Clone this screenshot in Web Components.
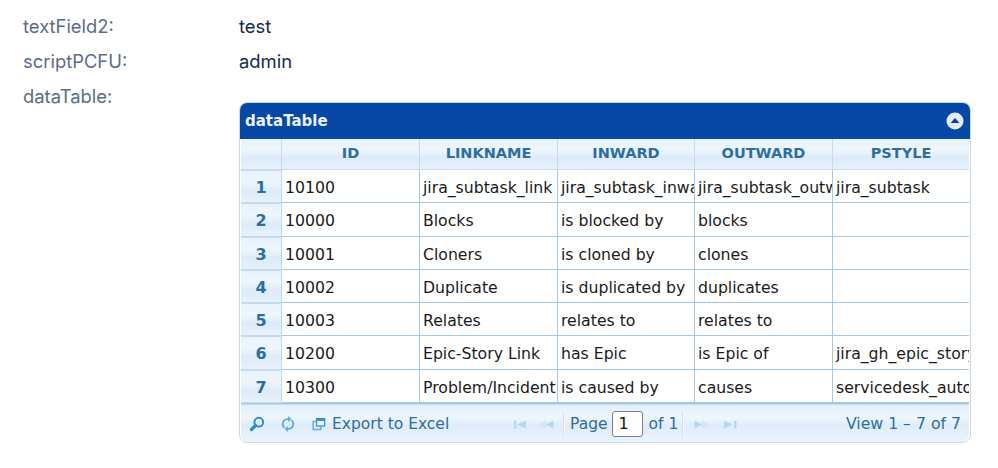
<!DOCTYPE html>
<html>
<head>
<meta charset="utf-8">
<style>
  html, body { margin: 0; padding: 0; background: #fff; height: 468px; overflow: hidden; }
</style>
</head>
<body>
<issue-view>
  <field-row label="textField2:">test</field-row>
  <field-row label="scriptPCFU:">admin</field-row>
  <field-row label="dataTable:"><data-grid caption="dataTable"></data-grid></field-row>
</issue-view>

<script>
class IssueView extends HTMLElement {
  constructor() {
    super();
    this.attachShadow({ mode: "open" });
    this.shadowRoot.innerHTML = `
      <style>
        :host { display: block; padding: 9px 0 0 23px; font-family: Inter, "Noto Sans", sans-serif; font-size: 18.4px; }
      </style>
      <slot></slot>`;
  }
}

class FieldRow extends HTMLElement {
  constructor() {
    super();
    this.attachShadow({ mode: "open" });
  }
  connectedCallback() {
    this.shadowRoot.innerHTML = `
      <style>
        :host { display: grid; grid-template-columns: 216px auto; justify-content: start; }
        .label { color: #5e6c84; height: 35px; line-height: 35px; }
        .value { color: #172b4d; line-height: 35px; min-height: 35px; }
      </style>
      <div class="label">${this.getAttribute("label")}</div>
      <div class="value"><slot></slot></div>`;
  }
}

const ICONS = {
  search: `<svg width="16" height="16" viewBox="0 0 16 16"><circle cx="9.8" cy="6.2" r="4.4" fill="none" stroke="#2e8ad0" stroke-width="2"/><path d="M6.500 9.500 2.500 13.500" stroke="#2e8ad0" stroke-width="3.200" stroke-linecap="round"/></svg>`,
  reload: `<svg width="16" height="18" viewBox="0 0 16 18" fill="none" stroke="#62ade8" stroke-width="1.800"><path d="M8 4.200H7A4.800 4.800 0 0 0 4.600 12.800"/><path d="M8 13.800h1A4.800 4.800 0 0 0 11.400 5.200"/><path d="M8 1v6L11.500 4zM8 17v-6L4.500 14z" fill="#62ade8" stroke="none"/></svg>`,
  newwin: `<svg width="16" height="16" viewBox="0 0 16 16" fill="none" stroke="#3d8fcf" stroke-width="1.300"><rect x="5.600" y="2.600" width="8" height="7.400" fill="#eaf4fd"/><path d="M5.600 3.800h8" stroke-width="2.400"/><path d="M5.600 5.600H2.200v7.800h7.600v-3.400" stroke="#62ade8" stroke-width="1.500"/></svg>`,
  first: `<svg width="16" height="12" viewBox="0 0 16 12" fill="#b5d8f4"><rect x="2" y="2.500" width="2.400" height="8"/><path d="M4.800 6.500 14 2.500v8z"/></svg>`,
  prev: `<svg width="16" height="12" viewBox="0 0 16 12"><path d="M0.500 6.500 8 2.500v8z" fill="#d0e6f8"/><path d="M7.500 6.500 15.500 2.500v8z" fill="#b5d8f4"/></svg>`,
  next: `<svg width="16" height="12" viewBox="0 0 16 12"><path d="M15.500 6.500 8 2.500v8z" fill="#d0e6f8"/><path d="M8.500 6.500 .5 2.500v8z" fill="#b5d8f4"/></svg>`,
  last: `<svg width="16" height="12" viewBox="0 0 16 12" fill="#b5d8f4"><rect x="12" y="2.500" width="2.400" height="8"/><path d="M10.800 6.500 2 2.500v8z"/></svg>`
};

class GridPager extends HTMLElement {
  constructor() {
    super();
    this.attachShadow({ mode: "open" });
    this.shadowRoot.innerHTML = `
      <style>
        :host {
          display: grid; grid-template-columns: 271px auto 1fr; align-items: center;
          box-sizing: border-box; height: 37.7px; padding-top: 1px; color: #2e6e9e; font-size: 15.500px;
          background: linear-gradient(#e4f0fb 0%, #eef6fd 35%, #dfecf9 55%, #e9f3fc 100%);
          border-top: 1px solid #c5dbec;
          border-radius: 0 0 8px 8px;
        }
        .left, .center, .right { display: flex; align-items: center; }
        .left { padding-left: 8px; }
        .left svg { display: block; }
        .reload { margin-left: 15px; }
        .win { margin-left: 15px; margin-right: 5px; }
        .sep { width: 1px; height: 24px; background: #d3e1ee; border-right: 1px solid #f0f6fc; margin: 0 5px 0 9px; }
        .sep.after { margin: 0 10px 0 4px; }
        .nav { display: flex; gap: 10px; }
        .nav.end { gap: 12px; }
        .right { justify-content: flex-end; padding-right: 8px; font-size: 15.700px; }
        .box {
          width: 31px; height: 26px; margin: 0 6px 0 4px; box-sizing: border-box;
          border: 1px solid #7a7f85; border-radius: 3px; background: #fff; color: #111;
          text-align: left; padding-left: 6px; line-height: 24px; font-size: 16px;
        }
      </style>
      <div class="left">
        ${ICONS.search}<span class="reload">${ICONS.reload}</span><span class="win">${ICONS.newwin}</span><span>Export to Excel</span>
      </div>
      <div class="center">
        <span class="nav">${ICONS.first}${ICONS.prev}</span>
        <span class="sep"></span>
        <span>Page</span><span class="box">1</span><span>of 1</span>
        <span class="sep after"></span>
        <span class="nav end">${ICONS.next}${ICONS.last}</span>
      </div>
      <div class="right">View 1 – 7 of 7</div>`;
  }
}

class DataGrid extends HTMLElement {
  constructor() {
    super();
    this.attachShadow({ mode: "open" });
  }
  connectedCallback() {
    const columns = ["ID", "LINKNAME", "INWARD", "OUTWARD", "PSTYLE"];
    const rows = [
      ["10100", "jira_subtask_link", "jira_subtask_inward", "jira_subtask_outward", "jira_subtask"],
      ["10000", "Blocks", "is blocked by", "blocks", ""],
      ["10001", "Cloners", "is cloned by", "clones", ""],
      ["10002", "Duplicate", "is duplicated by", "duplicates", ""],
      ["10003", "Relates", "relates to", "relates to", ""],
      ["10200", "Epic-Story Link", "has Epic", "is Epic of", "jira_gh_epic_story"],
      ["10300", "Problem/Incident", "is caused by", "causes", "servicedesk_autolink"]
    ];
    const head = columns.map(c => `<div class="th">${c}</div>`).join("");
    const body = rows.map((r, i) => `<div class="num">${i + 1}</div>` +
      r.map(v => `<div class="td">${v}</div>`).join("")).join("");
    this.shadowRoot.innerHTML = `
      <style>
        :host {
          display: block; width: 732px; box-sizing: border-box; margin-top: 23px;
          border: 1px solid #c5dbec; border-radius: 8px; background: #fff;
          font-family: "DejaVu Sans", "Liberation Sans", sans-serif; font-size: 14.500px;
          padding: 0 1px 0 1px; line-height: normal;
        }
        .caption {
          display: flex; justify-content: space-between; align-items: center;
          height: 36px; box-sizing: border-box; padding: 0 6px 0 5px;
          background: #0747a6; color: #eaf2fb; font-weight: bold;
          border-radius: 7px 7px 0 0; font-size: 15px; margin: 0 -1px;
        }
        .toggle { display: block; }
        .table {
          display: grid;
          grid-template-columns: 41px 138px 138px 137px 138px 136px;
          grid-auto-rows: 33.3px;
          border-bottom: 1px solid #a6c9e2;
        }
        .th, .corner {
          height: 31px; box-sizing: border-box; line-height: 29px; text-align: center;
          background: linear-gradient(#e8f3fd 0%, #eef6fd 35%, #ddebf8 62%, #e6f1fb 100%);
          border-right: 1px solid #c5dbec; border-bottom: 1px solid #c5dbec;
          color: #2e6e9e; font-weight: bold; overflow: hidden;
        }
        .th:nth-child(6) { border-right: 0; }
        .num {
          box-sizing: border-box; text-align: center; line-height: 33px; font-weight: bold; color: #2e6e9e; font-size: 16px;
          background: linear-gradient(#e8f3fd 0%, #eef6fd 35%, #ddebf8 62%, #e6f1fb 100%);
          border: 1px solid #c5dbec; border-width: 1px 1px 1px 0;
        }
        .td {
          box-sizing: border-box; padding: 0 0 0 3px; line-height: 35px; color: #1a1a1a; font-size: 15.700px;
          white-space: nowrap; overflow: hidden;
          border-right: 1px solid #a6c9e2; border-bottom: 1px solid #a6c9e2;
        }
        .td:nth-child(6n) { border-right: 0; }
      </style>
      <div class="caption">
        <span>dataTable</span>
        <svg class="toggle" width="18" height="18" viewBox="0 0 18 18"><circle cx="9" cy="9" r="8.500" fill="#e4ecf6"/><path d="M9 6.500 12.500 10.500h-7z" fill="#0b3f8f" stroke="#0b3f8f" stroke-linejoin="round"/></svg>
      </div>
      <div class="table" style="grid-template-rows: 31px">
        <div class="corner"></div>${head}${body}
      </div>
      <grid-pager></grid-pager>`;
  }
}

customElements.define("issue-view", IssueView);
customElements.define("field-row", FieldRow);
customElements.define("grid-pager", GridPager);
customElements.define("data-grid", DataGrid);
</script>
</body>
</html>
